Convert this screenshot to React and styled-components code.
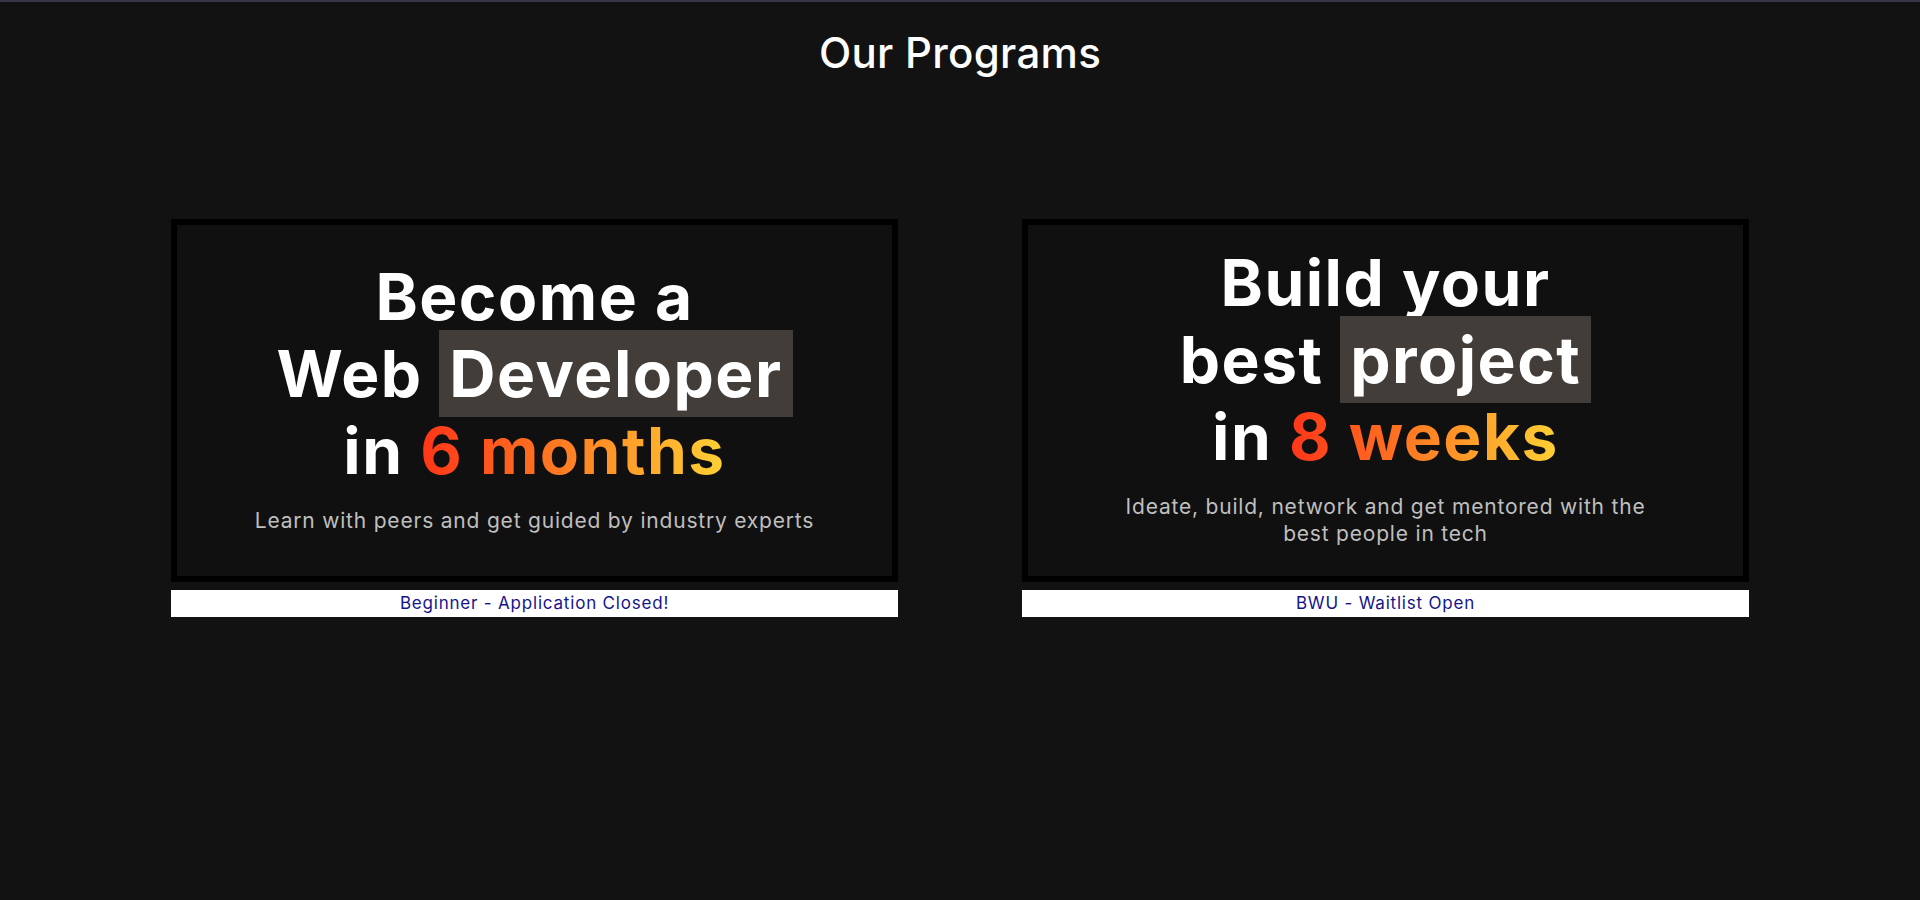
import styled, { createGlobalStyle } from 'styled-components';

const GlobalStyle = createGlobalStyle`
    body {
        margin: 0;
        background: #121212;
        font-family: 'Inter', 'Noto Sans', sans-serif;
    }
`;

const programs = [
    {
        lines: [["Become a"], ["Web ", { hl: "Developer" }], ["in ", { grad: "6 months" }]],
        subtitle: "Learn with peers and get guided by industry experts",
        caption: "Beginner - Application Closed!"
    },
    {
        lines: [["Build your"], ["best ", { hl: "project" }], ["in ", { grad: "8 weeks" }]],
        subtitle: "Ideate, build, network and get mentored with the best people in tech",
        caption: "BWU - Waitlist Open"
    }
];

function Piece({ part }) {
    if (typeof part === "string") return part;
    if (part.hl) return <Highlight>{part.hl}</Highlight>;
    return <Gradient>{part.grad}</Gradient>;
}

export default function App() {
    return (
        <Page>
            <GlobalStyle />
            <TopLine />
            <Title>Our Programs</Title>
            <Cards>
                {programs.map(p => (
                    <Card key={p.caption}>
                        <Banner>
                            <Headline>
                                {p.lines.map((line, i) => (
                                    <Line key={i}>
                                        {line.map((part, j) => <Piece key={j} part={part} />)}
                                    </Line>
                                ))}
                            </Headline>
                            <Subtitle>{p.subtitle}</Subtitle>
                        </Banner>
                        <Caption>{p.caption}</Caption>
                    </Card>
                ))}
            </Cards>
        </Page>
    );
}

const Page = styled.div`
    width: 100%;
    min-height: 900px;
    background: #121212;
`;

const TopLine = styled.div`
    height: 2px;
    background: #35354a;
`;

const Title = styled.h2`
    margin: 0;
    padding-top: 26px;
    text-align: center;
    font-weight: 500;
    font-size: 42px;
    line-height: 50px;
    letter-spacing: 0.3px;
    color: #FFFFFF;
`;

const Cards = styled.div`
    display: flex;
    justify-content: center;
    gap: 124px;
    margin-top: 141px;
`;

const Card = styled.div`
    width: 727px;
    display: flex;
    flex-direction: column;
`;

const Banner = styled.div`
    box-sizing: border-box;
    height: 363px;
    border: 6px solid #000000;
    padding-bottom: 10px;
    background: #101010;
    display: flex;
    flex-direction: column;
    align-items: center;
    justify-content: center;
`;

const Headline = styled.div`
    display: flex;
    flex-direction: column;
    align-items: center;
    font-weight: 700;
    font-size: 64px;
    line-height: 77px;
    letter-spacing: 1.5px;
    color: #FFFFFF;
`;

const Line = styled.div`
    white-space: pre;
`;

const Highlight = styled.span`
    background: #433d39;
    padding: 5px 10px;
`;

const Gradient = styled.span`
    background: linear-gradient(90deg, #ff3519 0%, #ff6a1f 35%, #ffa22a 70%, #ffd135 100%);
    -webkit-background-clip: text;
    background-clip: text;
    color: transparent;
`;

const Subtitle = styled.p`
    margin: 18px 0 0;
    max-width: 560px;
    text-align: center;
    font-size: 21px;
    line-height: 27px;
    letter-spacing: 0.8px;
    color: #bfbfbf;
`;

const Caption = styled.div`
    margin-top: 8px;
    height: 27px;
    background: #FFFFFF;
    text-align: center;
    font-size: 17px;
    line-height: 27px;
    letter-spacing: 0.8px;
    color: #15158c;
`;
